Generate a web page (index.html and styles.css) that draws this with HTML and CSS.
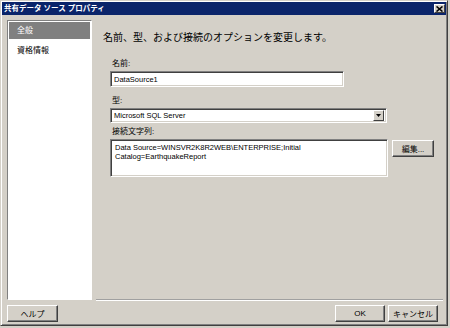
FILE: index.html
```html
<!DOCTYPE html>
<html lang="ja">
<head>
  <meta charset="UTF-8" />
  <title>共有データ ソース プロパティ</title>
  <link rel="stylesheet" href="styles.css">
</head>
<body>
  <div class="window">
    <div class="titlebar">
      <span class="title">共有データ ソース プロパティ</span>
      <span class="close">
        <svg width="7" height="6" viewBox="0 0 7 6"><path d="M0.5 0.5L6.5 5.5M6.5 0.5L0.5 5.5" stroke="#000" stroke-width="1.6"/></svg>
      </span>
    </div>
    <div class="main">
      <div class="left">
        <ul class="nav">
          <li class="selected">全般</li>
          <li>資格情報</li>
        </ul>
        <button class="btn btn-help">ヘルプ</button>
      </div>
      <div class="right">
        <div class="content">
          <h2>名前、型、および接続のオプションを変更します。</h2>
          <label class="label" for="name">名前:</label>
          <input class="field field-name" id="name" type="text" value="DataSource1" />
          <div class="label">型:</div>
          <div class="field combo">
            <span class="combo-text">Microsoft SQL Server</span>
            <span class="combo-btn">
              <svg width="5" height="3" viewBox="0 0 5 3"><path d="M0 0H5L2.5 3Z" fill="#000"/></svg>
            </span>
          </div>
          <div class="label">接続文字列:</div>
          <div class="conn-row">
            <div class="field conn">Data Source=WINSVR2K8R2WEB\ENTERPRISE;Initial<br>Catalog=EarthquakeReport</div>
            <button class="btn btn-edit">編集...</button>
          </div>
        </div>
        <div class="separator"></div>
        <div class="actions">
          <button class="btn">OK</button>
          <button class="btn">キャンセル</button>
        </div>
      </div>
    </div>
  </div>
</body>
</html>
```

FILE: styles.css
```css
* {
  box-sizing: border-box;
}
body {
  margin: 0;
  width: 450px;
  height: 328px;
  background-color: #d4d0c8;
  font-family: "Liberation Sans", "Noto Sans CJK JP", sans-serif;
  font-size: 8px;
  color: #000;
}
.window {
  width: 448px;
  height: 326px;
  display: flex;
  flex-direction: column;
  padding: 1px;
  border: 1px solid #d4d0c8;
  border-right-color: #404040;
  border-bottom-color: #404040;
  box-shadow: inset 1px 1px #fff, inset -1px -1px #808080;
}
.titlebar {
  height: 13px;
  background-color: #0a246a;
  color: #fff;
  display: flex;
  align-items: center;
  justify-content: space-between;
  padding: 0 1px 0 2px;
}
.title {
  font-weight: bold;
  font-size: 7.5px;
  line-height: 13px;
}
.close {
  width: 11px;
  height: 9px;
  background-color: #d4d0c8;
  border: 1px solid #fff;
  border-right-color: #404040;
  border-bottom-color: #404040;
  display: flex;
  align-items: center;
  justify-content: center;
}
.main {
  flex: 1;
  display: flex;
  gap: 4px;
  padding: 5px 3px 2px 5px;
}
.left {
  width: 85px;
  display: flex;
  flex-direction: column;
}
.nav {
  flex: 1;
  list-style: none;
  margin: 0;
  padding: 1px;
  background-color: #fff;
  border: 1px solid #808080;
  border-right-color: #fff;
  border-bottom-color: #fff;
  box-shadow: 1px 1px #d4d0c8;
}
.nav li {
  height: 17px;
  line-height: 17px;
  padding-left: 8px;
  margin-bottom: 3px;
}
.nav li.selected {
  background-color: #808080;
  color: #fff;
}
.btn {
  height: 17px;
  padding: 0;
  background-color: #d4d0c8;
  border: 1px solid #fff;
  border-right-color: #404040;
  border-bottom-color: #404040;
  box-shadow: inset -1px -1px #808080;
  font-family: inherit;
  font-size: 8px;
  color: #000;
}
.btn-help {
  width: 51px;
  margin-top: 5px;
}
.right {
  flex: 1;
  display: flex;
  flex-direction: column;
}
.content {
  flex: 1;
  display: flex;
  flex-direction: column;
  align-items: flex-start;
  padding: 11px 0 0 14px;
}
.content h2 {
  margin: 0 0 13px -7px;
  font-weight: normal;
  font-size: 10px;
  line-height: 14px;
}
.label {
  display: block;
  margin-left: 2px;
  line-height: 11px;
  margin-bottom: 2px;
}
.field {
  background-color: #fff;
  border: 1px solid #808080;
  border-right-color: #fff;
  border-bottom-color: #fff;
  box-shadow: inset 1px 1px #404040, inset -1px -1px #d4d0c8;
  font-family: inherit;
  font-size: 7.5px;
  color: #000;
}
.field-name {
  width: 234px;
  height: 16px;
  padding: 0 0 0 3px;
  margin: 0 0 8px;
  outline: none;
}
.combo {
  width: 277px;
  height: 15px;
  display: flex;
  align-items: center;
  justify-content: space-between;
  padding: 0 2px 0 3px;
  margin-bottom: 3px;
}
.combo-btn {
  width: 11px;
  height: 11px;
  background-color: #d4d0c8;
  border: 1px solid #fff;
  border-right-color: #404040;
  border-bottom-color: #404040;
  display: flex;
  align-items: center;
  justify-content: center;
}
.conn-row {
  display: flex;
  align-items: flex-start;
  gap: 4px;
}
.conn {
  width: 278px;
  height: 38px;
  padding: 3px 4px;
  line-height: 9px;
}
.btn-edit {
  width: 42px;
  margin-top: 1px;
}
.separator {
  height: 2px;
  border-top: 1px solid #a0a0a0;
  border-bottom: 1px solid #fff;
}
.actions {
  display: flex;
  justify-content: flex-end;
  gap: 3px;
  margin-top: 4px;
  padding-right: 5px;
}
.actions .btn {
  width: 50px;
}
```
